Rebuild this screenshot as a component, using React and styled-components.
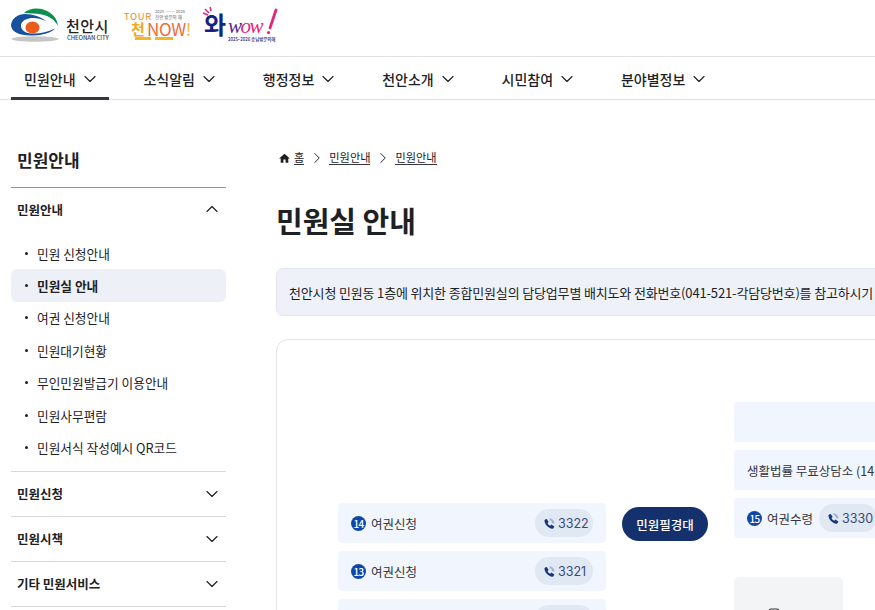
import React from 'react';
import styled, { createGlobalStyle } from 'styled-components';
import { ChevronDown, ChevronUp, ChevronRight } from 'lucide-react';

const FONT = '"Noto Sans CJK KR", "Noto Sans", sans-serif';

const Global = createGlobalStyle`
  html, body { margin: 0; padding: 0; background: #fff; overflow: hidden; width: 875px; height: 610px; }
  body { font-family: ${FONT}; color: #1e2124; }
  * { box-sizing: border-box; }
  ul { list-style: none; margin: 0; padding: 0; }
`;

const Page = styled.div`
  width: 875px;
  height: 610px;
  overflow: hidden;
`;
const TopBar = styled.header`
  height: 57px;
  padding: 5px 0 0 11px;
  display: flex;
  align-items: flex-start;
  gap: 11px;
  border-bottom: 1px solid #dfe1e3;
`;
const LogoBox = styled.div`
  position: relative;
  height: 40px;
  flex: none;
  width: ${p => p.$w}px;
`;
const LogoArt = styled.svg`
  position: absolute;
  left: 0;
  top: 0;
`;
const LogoKo = styled.span`
  position: absolute;
  font-family: ${p => (p.$serif ? '"Liberation Serif", serif' : FONT)};
  font-style: ${p => (p.$serif ? 'italic' : 'normal')};
  font-weight: ${p => p.$wt || 500};
  line-height: 1;
  white-space: nowrap;
  color: ${p => p.$c || '#222'};
  font-size: ${p => p.$s}px;
  left: ${p => p.$x}px;
  top: ${p => p.$y}px;
  letter-spacing: ${p => p.$ls || 0}px;
`;
const LogoTint = styled.span`
  color: ${p => p.$c};
`;
const Nav = styled.nav`
  height: 43px;
  padding-left: 11px;
  display: flex;
  border-bottom: 1px solid #dfe1e3;
`;
const NavItem = styled.div`
  display: flex;
  flex: none;
  align-items: center;
  gap: 4px;
  height: 43px;
  padding: ${p => (p.$active ? '3px' : '0')} 0 0 13px;
  width: ${p => p.$w}px;
  margin-right: ${p => p.$mr}px;
  font-size: 14px;
  font-weight: 500;
  color: #1e2124;
  white-space: nowrap;
  border-bottom: ${p => (p.$active ? '3px solid #33363d' : '0')};
  svg { flex: none; }
`;
const Body = styled.div`
  display: flex;
  padding-left: 11px;
`;
const Side = styled.aside`
  width: 215px;
  flex: none;
`;
const SideTitle = styled.h2`
  margin: 0;
  height: 88px;
  padding: 47px 0 0 6px;
  font-size: 17px;
  line-height: 26px;
  font-weight: 700;
  color: #1e2124;
  border-bottom: 1px solid #8a949e;
`;
const Group = styled.div`
  border-bottom: 1px solid #d6d9dc;
`;
const GroupHead = styled.div`
  height: ${p => p.$h}px;
  padding: 0 4px 0 6px;
  display: flex;
  align-items: center;
  justify-content: space-between;
  font-size: 12.5px;
  font-weight: 700;
  color: #1e2124;
`;
const SubList = styled.ul`
  padding: 7px 0;
`;
const SubItem = styled.li`
  height: 32.4px;
  display: flex;
  align-items: center;
  gap: 9px;
  padding-left: 14px;
  border-radius: 6px;
  font-size: 12.7px;
  font-weight: ${p => (p.$on ? 700 : 400)};
  color: #1e2124;
  background: ${p => (p.$on ? '#edf1f7' : 'transparent')};
  &::before {
    content: '';
    width: 3px;
    height: 3px;
    border-radius: 50%;
    background: #1e2124;
    flex: none;
  }
`;
const Main = styled.main`
  margin-left: 50px;
  width: 900px;
  flex: none;
  padding-top: 47px;
`;
const Crumbs = styled.div`
  display: flex;
  align-items: center;
  height: 22px;
  padding-left: 2px;
  font-size: 11.2px;
  color: #1e2124;
  svg { flex: none; }
`;
const Crumb = styled.span`
  border-bottom: 1px solid #33363d;
  line-height: 13px;
  margin-left: ${p => p.$ml || 0}px;
`;
const Sep = styled(ChevronRight)`
  margin: 0 3px 0 4px;
`;
const Title = styled.h1`
  margin: 31px 0 0;
  font-size: 29px;
  line-height: 40px;
  font-weight: 700;
  color: #1e2124;
`;
const Notice = styled.div`
  margin-top: 28px;
  height: 48px;
  border: 1px solid #e1e6ee;
  border-radius: 7px;
  background: #eef2f8;
  padding: 0 12px;
  display: flex;
  align-items: center;
  font-size: 13px;
  letter-spacing: -0.16px;
  color: #1e2124;
  white-space: nowrap;
`;
const Card = styled.section`
  margin-top: 23px;
  height: 400px;
  border: 1px solid #e3e5e8;
  border-radius: 12px;
  padding: 62px 0 0 61px;
  display: flex;
`;
const LeftCol = styled.div`
  width: 268px;
  flex: none;
  padding-top: 101px;
  display: flex;
  flex-direction: column;
  gap: 8px;
`;
const Desk = styled.div`
  width: 86px;
  height: 34px;
  flex: none;
  margin: 105px 0 0 16px;
  border-radius: 17px;
  background: #14316e;
  color: #fff;
  font-size: 12.5px;
  font-weight: 500;
  display: flex;
  align-items: center;
  justify-content: center;
`;
const RightCol = styled.div`
  margin-left: 26px;
  display: flex;
  flex-direction: column;
  gap: 8px;
`;
const Row = styled.div`
  width: ${p => p.$w || 268}px;
  height: 40px;
  flex: none;
  border-radius: 4px;
  background: #f1f5fd;
  display: flex;
  align-items: center;
  justify-content: ${p => (p.$start ? 'flex-start' : 'space-between')};
  gap: 6px;
  padding: 0 13px;
  font-size: 12.5px;
  color: #33363d;
  white-space: nowrap;
`;
const RowLabel = styled.span`
  display: flex;
  align-items: center;
  gap: 5px;
`;
const Num = styled.span`
  width: 15px;
  height: 15px;
  border-radius: 50%;
  background: #0f47a8;
  color: #fff;
  font-size: 10px;
  font-weight: 500;
  letter-spacing: -0.6px;
  display: inline-flex;
  align-items: center;
  justify-content: center;
  flex: none;
`;
const Tel = styled.span`
  height: 28px;
  width: 58px;
  flex: none;
  margin-left: ${p => (p.$push ? 'auto' : '0')};
  padding-left: 8px;
  border-radius: 14px;
  background: #e0e8f4;
  color: #3a4a78;
  font-family: Inter, sans-serif;
  font-size: 12.5px;
  display: inline-flex;
  align-items: center;
  gap: 2px;
`;
const Kiosk = styled.div`
  width: 109px;
  height: 60px;
  flex: none;
  margin-top: 31px;
  border-radius: 5px;
  background: #f3f4f6;
  display: flex;
  justify-content: flex-start;
  padding: 31px 0 0 33px;
`;

const Phone = () => (
  <svg width="13" height="13" viewBox="0 0 24 24">
    <path fill="#16357a" d="M7 3.500 10.500 9 8.300 11c1 2.500 2.800 4.300 5.200 5.200l2-2.200 5.500 3.500-1.500 3c-.4.900-1.300 1.500-2.300 1.300C9.800 20.700 3.600 14.500 2.700 7c-.1-1 .4-2 1.300-2.400Z" />
    <path fill="#9fb0d2" d="M12 2.500c4.800.3 8.700 4 9.300 8.800l-3 .6-1.600-1-.8-2.700-2-2.200-1.900-.4Z" />
  </svg>
);

const TelPill = ({ n, push }) => (
  <Tel $push={push}>{n !== undefined && <Phone />}{n}</Tel>
);

const HomeIcon = () => (
  <svg width="13" height="13" viewBox="0 0 24 24">
    <path fill="#1e2124" d="M10 20v-6h4v6h5v-8h3L12 3 2 12h3v8z" />
  </svg>
);

const CityLogo = () => (
  <LogoBox $w={100}>
    <LogoArt width="50" height="40" viewBox="0 0 50 40">
      <ellipse cx="24" cy="34" rx="23.500" ry="2.800" fill="#c6c7c4" />
      <path fill="#0a8f4c" d="M13 8C18 3 28 2 36 6c6 3 10.500 8 11 15-3-6-9-10-16-11.500-7-1.300-13-1-18-1.500Z" />
      <path fill="#17509f" d="M0 20C1 13 7 9 14 9c8 0 16 3 21 7-6-2.500-12-3.500-17-2.500-5 1-8 3.500-8 7.500s4 7 10 7.500c8 .5 16-1 24-5-3 4-13 7-22 7C9 31 0 27 0 20Z" />
      <ellipse cx="21.500" cy="22.500" rx="7" ry="6" fill="#ee5a1c" />
    </LogoArt>
    <LogoKo $s={15} $x={55} $y={13} $ls={0.4}>천안시</LogoKo>
    <LogoKo $s={6} $x={56} $y={29.500} $c="#444" $ls={-0.1}>CHEONAN CITY</LogoKo>
  </LogoBox>
);

const TourLogo = () => (
  <LogoBox $w={66}>
    <LogoKo $s={9.500} $x={2} $y={7} $c="#f0861f" $ls={0.6} $wt={400}>TOUR</LogoKo>
    <LogoKo $s={4} $x={33} $y={4} $c="#888">2025 ——— 2026</LogoKo>
    <LogoKo $s={4.500} $x={33} $y={10} $c="#888">천안 방문의 해</LogoKo>
    <LogoKo $s={15} $x={9} $y={16} $c="#f2a91e" $wt={700}>천</LogoKo>
    <LogoKo $s={17} $x={25} $y={15} $c="#ef6a3a" $ls={-0.3} $wt={400}>
      NOW<LogoTint $c="#f5b52b">!</LogoTint>
    </LogoKo>
    <LogoArt width="66" height="40" viewBox="0 0 66 40">
      <path d="M13 33.500h16M33 33.500h18" stroke="#f5b52b" strokeWidth="3" />
    </LogoArt>
  </LogoBox>
);

const WowLogo = () => (
  <LogoBox $w={80}>
    <LogoArt width="80" height="40" viewBox="0 0 80 40">
      <path d="M4 8l5 2M6 4l4 4M11 2l1 4" stroke="#e0267f" strokeWidth="1.500" />
      <path d="M77 5 71 23" stroke="#e0267f" strokeWidth="2.800" strokeLinecap="round" />
      <circle cx="69.500" cy="27.500" r="1.600" fill="#e0267f" />
    </LogoArt>
    <LogoKo $s={24} $x={5} $y={7} $c="#16237e" $wt={700}>와</LogoKo>
    <LogoKo $s={21} $x={29} $y={11} $c="#e0267f" $ls={-1.500} $serif>
      <LogoTint $c="#5a2a8c">w</LogoTint>ow
    </LogoKo>
    <LogoKo $s={4.500} $x={29} $y={31.500} $c="#16237e" $ls={-0.1}>2025~2026 충남방문의해</LogoKo>
  </LogoBox>
);

const navItems = [
  ['민원안내', 98, 21.4], ['소식알림', 98, 21.4], ['행정정보', 98, 21.4],
  ['천안소개', 98, 21.4], ['시민참여', 98, 21.4], ['분야별정보', 110, 0],
];
const subs = ['민원 신청안내', '민원실 안내', '여권 신청안내', '민원대기현황', '무인민원발급기 이용안내', '민원사무편람', '민원서식 작성예시 QR코드'];

export default function App() {
  return (
    <Page>
      <Global />
      <TopBar>
        <CityLogo />
        <TourLogo />
        <WowLogo />
      </TopBar>
      <Nav>
        {navItems.map(([t, w, mr], i) => (
          <NavItem key={t} $w={w} $mr={mr} $active={i === 0}>
            {t}
            <ChevronDown size={20} strokeWidth={1.4} />
          </NavItem>
        ))}
      </Nav>
      <Body>
        <Side>
          <SideTitle>민원안내</SideTitle>
          <Group>
            <GroupHead $h={42}>민원안내<ChevronUp size={20} strokeWidth={1.4} /></GroupHead>
            <SubList>
              {subs.map((s, i) => <SubItem key={s} $on={i === 1}>{s}</SubItem>)}
            </SubList>
          </Group>
          <Group><GroupHead $h={44}>민원신청<ChevronDown size={20} strokeWidth={1.4} /></GroupHead></Group>
          <Group><GroupHead $h={44}>민원시책<ChevronDown size={20} strokeWidth={1.4} /></GroupHead></Group>
          <Group><GroupHead $h={44}>기타 민원서비스<ChevronDown size={20} strokeWidth={1.4} /></GroupHead></Group>
        </Side>
        <Main>
          <Crumbs>
            <HomeIcon />
            <Crumb $ml={3}>홈</Crumb>
            <Sep size={18} strokeWidth={1.3} />
            <Crumb>민원안내</Crumb>
            <Sep size={18} strokeWidth={1.3} />
            <Crumb>민원안내</Crumb>
          </Crumbs>
          <Title>민원실 안내</Title>
          <Notice>천안시청 민원동 1층에 위치한 종합민원실의 담당업무별 배치도와 전화번호(041-521-각담당번호)를 참고하시기 바</Notice>
          <Card>
            <LeftCol>
              <Row><RowLabel><Num>14</Num>여권신청</RowLabel><TelPill n="3322" /></Row>
              <Row><RowLabel><Num>13</Num>여권신청</RowLabel><TelPill n="3321" /></Row>
              <Row><TelPill push /></Row>
            </LeftCol>
            <Desk>민원필경대</Desk>
            <RightCol>
              <Row $w={300} />
              <Row $w={300} $start>생활법률 무료상담소 (14</Row>
              <Row $w={300} $start><RowLabel><Num>15</Num>여권수령</RowLabel><TelPill n="3330" /></Row>
              <Kiosk>
                <svg width="14" height="14" viewBox="0 0 14 14"><rect x="2" y="1" width="10" height="13" rx="2" fill="none" stroke="#333" strokeWidth="1.200" /></svg>
              </Kiosk>
            </RightCol>
          </Card>
        </Main>
      </Body>
    </Page>
  );
}
